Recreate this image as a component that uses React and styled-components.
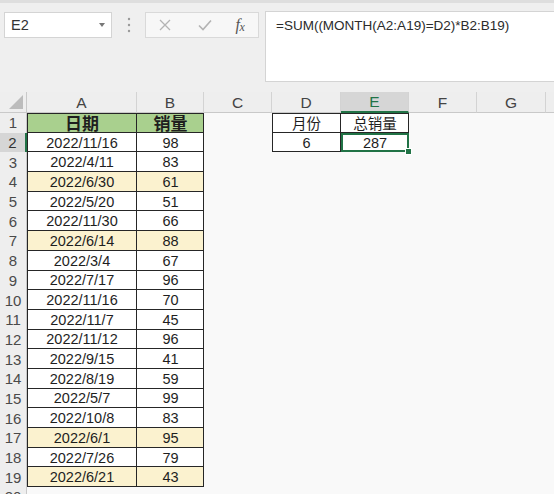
import React from 'react';
import styled, { createGlobalStyle } from 'styled-components';

const GREEN = '#217346';
const LINE = '#262626';

const rows = [
  ['2022/11/16', 98],
  ['2022/4/11', 83],
  ['2022/6/30', 61],
  ['2022/5/20', 51],
  ['2022/11/30', 66],
  ['2022/6/14', 88],
  ['2022/3/4', 67],
  ['2022/7/17', 96],
  ['2022/11/16', 70],
  ['2022/11/7', 45],
  ['2022/11/12', 96],
  ['2022/9/15', 41],
  ['2022/8/19', 59],
  ['2022/5/7', 99],
  ['2022/10/8', 83],
  ['2022/6/1', 95],
  ['2022/7/26', 79],
  ['2022/6/21', 43],
];

const COLS = ['A', 'B', 'C', 'D', 'E', 'F', 'G', 'H'];

const Global = createGlobalStyle`
  html, body {
    margin: 0;
    padding: 0;
    background: #f9f9f9;
    overflow: hidden;
  }
  body {
    font-family: "Liberation Sans", "Noto Sans CJK SC", sans-serif;
  }
`;

const Page = styled.div`
  width: 554px;
  height: 494px;
  overflow: hidden;
`;

const TopBar = styled.div`
  height: 92px;
  box-sizing: border-box;
  background: #efefef;
  border-top: 3px solid #dedede;
  display: flex;
  align-items: flex-start;
  padding-top: 8px;
  padding-left: 4px;
`;

const NameBox = styled.div`
  width: 108px;
  height: 26px;
  margin-top: 1px;
  box-sizing: border-box;
  background: #fff;
  border: 1px solid #d4d4d4;
  display: flex;
  align-items: center;
  justify-content: space-between;
  padding: 0 6px 0 6px;
  font-size: 14.5px;
  color: #333;
`;

const Caret = styled.span`
  width: 0;
  height: 0;
  border-left: 3.5px solid transparent;
  border-right: 3.5px solid transparent;
  border-top: 4px solid #777;
`;

const Grip = styled.div`
  width: 33px;
  height: 28px;
  display: flex;
  align-items: center;
  justify-content: center;
`;

const ToolBox = styled.div`
  width: 114px;
  height: 26px;
  margin-top: 1px;
  box-sizing: border-box;
  background: #f7f7f7;
  border: 1px solid #d9d9d9;
  display: flex;
  align-items: center;
  padding-left: 10px;
`;

const ToolButton = styled.div`
  width: ${(p) => p.$w}px;
  margin-left: ${(p) => p.$gap || 0}px;
  height: 24px;
  display: flex;
  align-items: center;
  justify-content: center;
`;

const Fx = styled.span`
  font-family: "Liberation Serif", "DejaVu Serif", serif;
  font-style: italic;
  font-size: 16px;
  color: #555;
  letter-spacing: -0.5px;
  sub {
    font-size: 12px;
    vertical-align: -1px;
  }
`;

const FormulaBox = styled.div`
  flex: 1;
  margin-left: 6px;
  height: 71px;
  box-sizing: border-box;
  background: #fff;
  border: 1px solid #d4d4d4;
  border-right: none;
  padding: 6px 0 0 10px;
  font-size: 13.5px;
  color: #2b2b2b;
`;

const Sheet = styled.div`
  display: grid;
  grid-template-columns: 27px 110px 67px 68px 69px 68px 68px 69px 30px;
  grid-template-rows: 21px repeat(20, 19.7px);
`;

const Corner = styled.div`
  background: #eeeeee;
  border-bottom: 1px solid #c9c9c9;
  border-right: 1px solid #c9c9c9;
  box-sizing: border-box;
  position: relative;
  &::after {
    content: '';
    position: absolute;
    right: 3px;
    bottom: 3px;
    width: 14px;
    height: 14px;
    background: #bcbcbc;
    clip-path: polygon(100% 0, 100% 100%, 0 100%);
  }
`;

const ColHead = styled.div`
  box-sizing: border-box;
  background: ${(p) => (p.$active ? '#d6d6d6' : '#eeeeee')};
  border-bottom: ${(p) => (p.$active ? `2px solid ${GREEN}` : '1px solid #c9c9c9')};
  border-right: 1px solid #d3d3d3;
  display: flex;
  align-items: center;
  justify-content: center;
  font-size: 15.5px;
  color: ${(p) => (p.$active ? GREEN : '#444')};
  padding-top: 1px;
`;

const RowHead = styled.div`
  box-sizing: border-box;
  background: ${(p) => (p.$active ? '#d6d6d6' : '#eeeeee')};
  border-right: ${(p) => (p.$active ? `2px solid ${GREEN}` : '1px solid #c9c9c9')};
  display: flex;
  align-items: center;
  justify-content: center;
  font-size: 15px;
  color: ${(p) => (p.$active ? '#333' : '#4a4a4a')};
`;

const edges = (p) => {
  if (!p.$boxed) return 'none';
  const s = [`inset -1px -1px 0 ${LINE}`];
  if (p.$left) s.push(`inset 1px 0 0 ${LINE}`);
  if (p.$top) s.push(`inset 0 1px 0 ${LINE}`);
  if (p.$sel) s.unshift(`inset 0 0 0 2px ${GREEN}`);
  return s.join(', ');
};

const Cell = styled.div`
  position: relative;
  display: flex;
  align-items: center;
  justify-content: center;
  font-size: ${(p) => (p.$bold ? '17px' : '14.5px')};
  font-weight: ${(p) => (p.$bold ? 700 : 400)};
  color: #1e1e1e;
  background: ${(p) => p.$fill || 'transparent'};
  box-shadow: ${edges};
  white-space: nowrap;
  &::after {
    content: '';
    display: ${(p) => (p.$sel ? 'block' : 'none')};
    position: absolute;
    right: -3px;
    bottom: -3px;
    width: 5px;
    height: 5px;
    background: ${GREEN};
    border: 1px solid #fff;
  }
`;

const HEAD_FILL = '#a9d08e';
const JUNE_FILL = '#fbf2cf';

const cellFor = (r, col) => {
  if ((col === 'A' || col === 'B') && r <= 19) {
    const base = { $boxed: true, $left: col === 'A', $top: r === 1 };
    if (r === 1) {
      return { ...base, $fill: HEAD_FILL, $bold: true, text: col === 'A' ? '日期' : '销量' };
    }
    const [date, qty] = rows[r - 2];
    const june = date.split('/')[1] === '6';
    return { ...base, $fill: june ? JUNE_FILL : '#fff', text: col === 'A' ? date : qty };
  }
  if ((col === 'D' || col === 'E') && r <= 2) {
    const base = { $boxed: true, $left: col === 'D', $top: r === 1, $fill: '#fff' };
    if (r === 1) return { ...base, text: col === 'D' ? '月份' : '总销量' };
    return { ...base, $sel: col === 'E', text: col === 'D' ? '6' : '287' };
  }
  return { text: '' };
};

const CrossIcon = () => (
  <svg width="14" height="14" viewBox="0 0 14 14">
    <path d="M2 2 L12 12 M12 2 L2 12" stroke="#b3b3b3" strokeWidth="1.3" fill="none" />
  </svg>
);

const CheckIcon = () => (
  <svg width="16" height="14" viewBox="0 0 16 14">
    <path d="M2 7.5 L6 11.5 L14 2.5" stroke="#b3b3b3" strokeWidth="1.6" fill="none" />
  </svg>
);

const GripIcon = () => (
  <svg width="4" height="16" viewBox="0 0 4 16">
    <circle cx="2" cy="2" r="1.2" fill="#9a9a9a" />
    <circle cx="2" cy="8" r="1.2" fill="#9a9a9a" />
    <circle cx="2" cy="14" r="1.2" fill="#9a9a9a" />
  </svg>
);

export default function App() {
  const body = [];
  for (let r = 1; r <= 20; r += 1) {
    body.push(<RowHead key={`h${r}`} $active={r === 2}>{r}</RowHead>);
    COLS.forEach((col) => {
      const { text, ...props } = cellFor(r, col);
      body.push(<Cell key={`${col}${r}`} {...props}>{text}</Cell>);
    });
  }

  return (
    <Page>
      <Global />
      <TopBar>
        <NameBox>
          E2
          <Caret />
        </NameBox>
        <Grip>
          <GripIcon />
        </Grip>
        <ToolBox>
          <ToolButton $w={18}><CrossIcon /></ToolButton>
          <ToolButton $w={22} $gap={20}><CheckIcon /></ToolButton>
          <ToolButton $w={24} $gap={12}>
            <Fx>f<sub>x</sub></Fx>
          </ToolButton>
        </ToolBox>
        <FormulaBox>=SUM((MONTH(A2:A19)=D2)*B2:B19)</FormulaBox>
      </TopBar>
      <Sheet>
        <Corner />
        {COLS.map((c) => (
          <ColHead key={c} $active={c === 'E'}>{c === 'H' ? '' : c}</ColHead>
        ))}
        {body}
      </Sheet>
    </Page>
  );
}
